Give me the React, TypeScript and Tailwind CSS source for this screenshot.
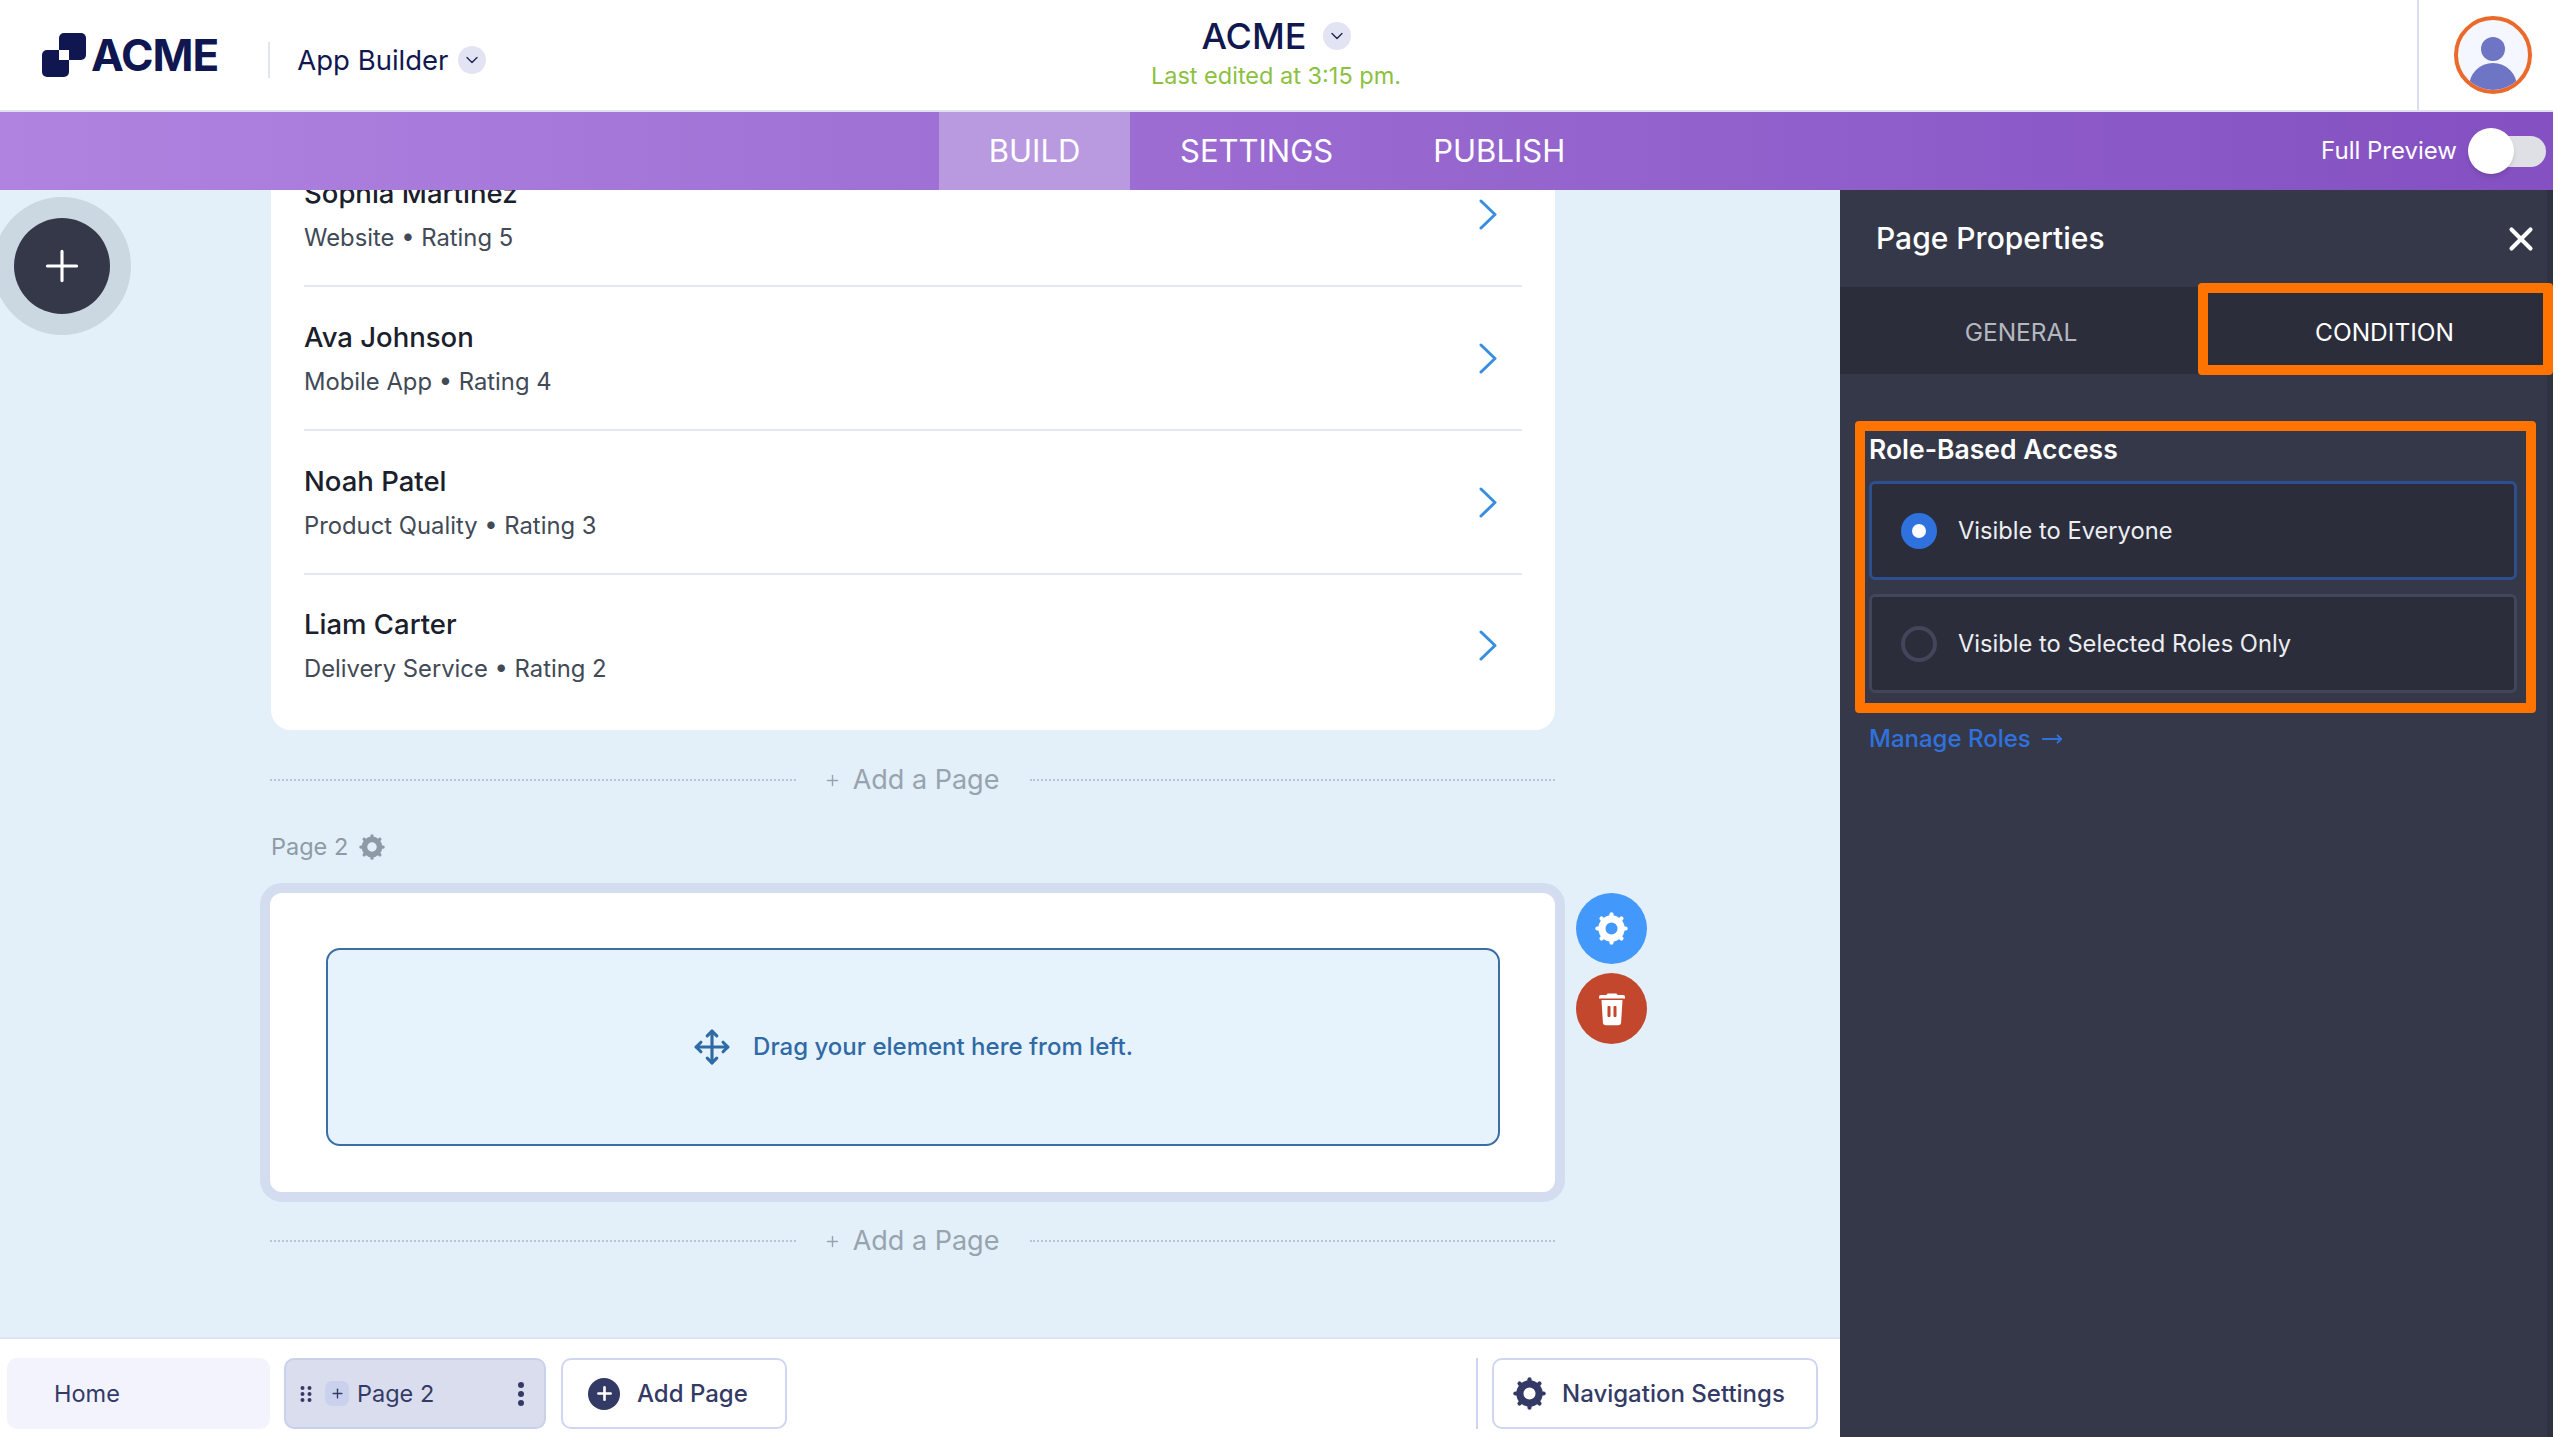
import React from 'react';
import { ChevronDown, Move, Plus, X, MoveRight } from 'lucide-react';

const reviews = [
    { name: 'Sophia Martinez', meta: 'Website • Rating 5' },
    { name: 'Ava Johnson', meta: 'Mobile App • Rating 4' },
    { name: 'Noah Patel', meta: 'Product Quality • Rating 3' },
    { name: 'Liam Carter', meta: 'Delivery Service • Rating 2' },
];

const Gear = ({ className }: { className: string }) => (
    <svg viewBox="0 0 24 24" fill="none" stroke="currentColor" className={className}>
        <circle cx="12" cy="12" r="7" strokeWidth="5.2" />
        {[0, 45, 90, 135, 180, 225, 270, 315].map(a => (
            <line key={a} x1="12" y1="3" x2="12" y2="1.7" strokeWidth="3" strokeLinecap="round" transform={`rotate(${a} 12 12)`} />
        ))}
    </svg>
);

const DropChip = () => (
    <div className="w-[28px] h-[28px] rounded-full bg-[#e2e4f4] flex items-center justify-center text-[#1d2452]">
        <ChevronDown size={20} strokeWidth={1.6} />
    </div>
);

const AddPageRow = () => (
    <div className="h-[40px] flex items-center">
        <div className="w-[526px] border-t-2 border-dotted border-[#b8c6d2]" />
        <div className="flex-1 flex items-center justify-center pr-[3px] text-[#97a3af] text-[27px]">
            <Plus size={17} strokeWidth={2} className="mr-[12px]" />
            <span>Add a Page</span>
        </div>
        <div className="w-[525px] border-t-2 border-dotted border-[#b8c6d2]" />
    </div>
);

const App = () => {
    return (
        <div className="w-[2553px] h-[1437px] flex flex-col overflow-hidden bg-white font-['Inter',sans-serif]">
            {/* Top header */}
            <header className="h-[112px] shrink-0 flex border-b-2 border-[#dfe0f0] bg-white">
                <div className="w-[1100px] flex items-center pl-[42px]">
                    <svg width="44" height="44" viewBox="0 0 44 44" className="-mt-[1px]">
                        <rect x="17" y="0" width="27" height="27" rx="5" fill="#0f1650" />
                        <rect x="0" y="17" width="27" height="27" rx="5" fill="#0f1650" />
                        <rect x="17" y="17" width="10" height="10" fill="#ffffff" />
                    </svg>
                    <span className="ml-[5px] text-[44px] font-bold text-[#0f1650] tracking-[-1px]">ACME</span>
                    <div className="ml-[50px] mt-[10px] w-[2px] h-[36px] bg-[#e2e4f3]" />
                    <span className="ml-[27px] mt-[12px] text-[27.5px] text-[#11184f]">App Builder</span>
                    <div className="ml-[10px] mt-[10px]">
                        <DropChip />
                    </div>
                </div>
                <div className="w-[352px] flex flex-col items-center pt-[14px]">
                    <div className="flex items-center gap-[16px] h-[44px]">
                        <span className="text-[36px] font-medium text-[#11184f]">ACME</span>
                        <DropChip />
                    </div>
                    <span className="text-[23.5px] text-[#8cc13f]">Last edited at 3:15 pm.</span>
                </div>
                <div className="flex-1" />
                <div className="w-[136px] border-l-2 border-[#dadcf0] flex items-start pl-[35px] pt-[16px]">
                    <div className="w-[78px] h-[78px] rounded-full border-[4px] border-[#ea6a2b] bg-[#f4f7ff] overflow-hidden">
                        <svg viewBox="0 0 70 70" className="w-full h-full">
                            <circle cx="35" cy="29" r="12" fill="#6e75c4" />
                            <circle cx="35" cy="67" r="24" fill="#6e75c4" />
                        </svg>
                    </div>
                </div>
            </header>

            {/* Purple tab bar */}
            <nav className="h-[78px] shrink-0 flex items-stretch pl-[939px] pr-[7px] bg-gradient-to-r from-[#b083e0] to-[#8450c2] text-white">
                <div className="w-[191px] bg-[#b99ae0] flex items-center justify-center text-[31px]">BUILD</div>
                <div className="px-[50px] flex items-center text-[31px]">SETTINGS</div>
                <div className="px-[50px] flex items-center text-[31px]">PUBLISH</div>
                <div className="ml-auto flex items-center gap-[11px]">
                    <span className="text-[24px]">Full Preview</span>
                    <div className="relative w-[78px] h-[46px] flex items-center justify-end">
                        <div className="w-[66px] h-[31px] rounded-full bg-[#dfe0e5]" />
                        <div className="absolute left-0 top-0 w-[46px] h-[46px] rounded-full bg-white shadow-md" />
                    </div>
                </div>
            </nav>

            <div className="flex-1 flex min-h-0">
                {/* Canvas */}
                <main className="flex-1 flex flex-col bg-[#e3f0f9] min-w-0">
                    <div className="relative flex-1 overflow-hidden min-h-0">
                        <div className="absolute left-[-7px] top-[7px] w-[138px] h-[138px] rounded-full bg-[#ccd8e1] flex items-center justify-center">
                            <div className="w-[96px] h-[96px] rounded-full bg-[#353848] flex items-center justify-center text-white">
                                <Plus size={50} strokeWidth={1.5} />
                            </div>
                        </div>

                        <div className="ml-[270px] w-[1285px] -mt-[47px]">
                            <div className="ml-[1px] bg-white rounded-b-[20px] pl-[33px] pr-[33px]">
                                {reviews.map((r, i) => (
                                    <div
                                        key={r.name}
                                        className={i < 3
                                            ? 'h-[144px] border-b-2 border-[#e2e8f0] flex items-center justify-between pr-[24px]'
                                            : 'h-[155px] pb-[14px] flex items-center justify-between pr-[24px]'}
                                    >
                                        <div className="mt-[2px] flex flex-col gap-[13px]">
                                            <span className="text-[27.5px] leading-[32px] font-medium text-[#1a202c]">{r.name}</span>
                                            <span className="text-[23.8px] leading-[32px] text-[#414a56]">{r.meta}</span>
                                        </div>
                                        <svg width="20" height="31" viewBox="0 0 20 31" fill="none">
                                            <polyline points="3,2 17,15.5 3,29" stroke="#3a8ede" strokeWidth="3" strokeLinecap="round" strokeLinejoin="round" />
                                        </svg>
                                    </div>
                                ))}
                            </div>

                            <div className="mt-[30px]">
                                <AddPageRow />
                            </div>

                            <div className="mt-[31px] ml-[1px] h-[32px] flex items-center gap-[11px] text-[#8e9aa6]">
                                <span className="text-[23.5px]">Page 2</span>
                                <Gear className="w-[26px] h-[26px]" />
                            </div>

                            <div className="mt-[20px] -ml-[10px] flex w-[1400px]">
                                <div className="w-[1305px] h-[319px] border-[10px] border-[#d3ddef] rounded-[22px] bg-white pt-[55px] pb-[46px] pl-[56px] pr-[55px]">
                                    <div className="h-full border-2 border-[#3a6ea5] rounded-[14px] bg-[#e6f3fc] flex items-center justify-center gap-[22px] text-[#2f6aa5]">
                                        <Move size={38} strokeWidth={2} />
                                        <span className="text-[24px] font-medium">Drag your element here from left.</span>
                                    </div>
                                </div>
                                <div className="ml-[11px] pt-[10px] flex flex-col gap-[9px]">
                                    <div className="w-[71px] h-[71px] rounded-full bg-[#4298fb] flex items-center justify-center text-white">
                                        <Gear className="w-[33px] h-[33px]" />
                                    </div>
                                    <div className="w-[71px] h-[71px] rounded-full bg-[#c2472d] flex items-center justify-center">
                                        <svg width="28" height="34" viewBox="0 0 28 34">
                                            <path d="M10 1.5h8a1.5 1.5 0 0 1 1.5 1.5H25a2 2 0 0 1 2 2v1.5H1V5a2 2 0 0 1 2-2h5.5A1.5 1.5 0 0 1 10 1.5Z" fill="#fff" />
                                            <path d="M3.5 8h21l-1.4 22.5a3 3 0 0 1-3 2.8H7.9a3 3 0 0 1-3-2.8L3.5 8Z" fill="#fff" />
                                            <rect x="9.5" y="14" width="3" height="11" rx="1" fill="#c2472d" />
                                            <rect x="15.5" y="14" width="3" height="11" rx="1" fill="#c2472d" />
                                        </svg>
                                    </div>
                                </div>
                            </div>

                            <div className="mt-[19px]">
                                <AddPageRow />
                            </div>
                        </div>
                    </div>

                    {/* Page bar */}
                    <div className="h-[100px] shrink-0 bg-white border-t-2 border-[#e3e2f0] pt-[19px] pl-[7px] pr-[22px] flex items-start text-[#343a66]">
                        <div className="w-[263px] h-[71px] rounded-[10px] bg-[#f2f3fc] flex items-center pl-[47px] text-[23.5px]">Home</div>
                        <div className="ml-[14px] w-[262px] h-[71px] rounded-[10px] bg-[#dadded] border-2 border-[#c9d1ec] flex items-center pl-[14px] pr-[20px]">
                            <svg width="12" height="18" viewBox="0 0 12 18" fill="currentColor">
                                <circle cx="2.5" cy="3" r="2" /><circle cx="9.5" cy="3" r="2" />
                                <circle cx="2.5" cy="9" r="2" /><circle cx="9.5" cy="9" r="2" />
                                <circle cx="2.5" cy="15" r="2" /><circle cx="9.5" cy="15" r="2" />
                            </svg>
                            <div className="ml-[13px] w-[24px] h-[25px] rounded-[7px] bg-[#c9d1ec] flex items-center justify-center">
                                <Plus size={15} strokeWidth={2.2} />
                            </div>
                            <span className="ml-[8px] text-[23.5px]">Page 2</span>
                            <svg className="ml-auto" width="6" height="24" viewBox="0 0 6 24" fill="currentColor">
                                <circle cx="3" cy="3" r="3" /><circle cx="3" cy="12" r="3" /><circle cx="3" cy="21" r="3" />
                            </svg>
                        </div>
                        <div className="ml-[15px] w-[226px] h-[71px] rounded-[10px] bg-white border-2 border-[#cfd6f0] flex items-center pl-[25px]">
                            <div className="w-[32px] h-[32px] rounded-full bg-[#343a66] flex items-center justify-center text-white">
                                <Plus size={21} strokeWidth={3} />
                            </div>
                            <span className="ml-[17px] text-[24px] font-medium">Add Page</span>
                        </div>
                        <div className="ml-auto w-[2px] h-[71px] bg-[#cbd4f0]" />
                        <div className="ml-[14px] w-[326px] h-[71px] rounded-[10px] bg-white border-2 border-[#cfd6f0] flex items-center pl-[19px]">
                            <Gear className="w-[33px] h-[33px]" />
                            <span className="ml-[16px] text-[24px] font-medium">Navigation Settings</span>
                        </div>
                    </div>
                </main>

                {/* Properties panel */}
                <aside className="relative w-[713px] shrink-0 bg-[#353848] border-r-[6px] border-[#2f3241] text-white">
                    <div className="h-[97px] flex items-center justify-between pl-[36px] pr-[7px]">
                        <span className="text-[30px] font-medium">Page Properties</span>
                        <X size={38} strokeWidth={2.6} />
                    </div>
                    <div className="h-[87px] pt-[3px] bg-[#2b2d3b] flex items-center text-[24.5px]">
                        <div className="w-[362px] text-center text-[#b5b7bf]">GENERAL</div>
                        <div className="flex-1 text-center pl-[20px]">CONDITION</div>
                    </div>
                    <div className="pt-[58px] pl-[29px]">
                        <div className="h-[36px] flex items-center text-[26.5px] font-semibold">Role-Based Access</div>
                        <div className="mt-[13px] w-[648px] h-[99px] rounded-[6px] border-[3px] border-[#2d4f8d] bg-[#2b2d3b] flex items-center pl-[29px] gap-[21px]">
                            <div className="w-[36px] h-[36px] rounded-full bg-[#2f72de] flex items-center justify-center">
                                <div className="w-[14px] h-[14px] rounded-full bg-white" />
                            </div>
                            <span className="text-[23.7px] text-[#eceef2]">Visible to Everyone</span>
                        </div>
                        <div className="mt-[14px] w-[648px] h-[99px] rounded-[6px] border-[3px] border-[#43465a] bg-[#2b2d3b] flex items-center pl-[29px] gap-[21px]">
                            <div className="w-[36px] h-[36px] rounded-full border-[4px] border-[#43465a]" />
                            <span className="text-[23.7px] text-[#eceef2]">Visible to Selected Roles Only</span>
                        </div>
                        <div className="mt-[28px] h-[36px] flex items-center gap-[10px] text-[#2f72de]">
                            <span className="text-[24px] font-medium">Manage Roles</span>
                            <MoveRight size={22} strokeWidth={2} />
                        </div>
                    </div>

                    {/* Orange callouts drawn over the panel */}
                    <div className="absolute left-[358px] right-[-6px] top-[93px] h-[92px] border-[10px] border-[#ff7300] rounded-[4px]" />
                    <div className="absolute left-[15px] top-[231px] w-[681px] h-[292px] border-[10px] border-[#ff7300] rounded-[4px]" />
                </aside>
            </div>
        </div>
    );
};

export default App;
